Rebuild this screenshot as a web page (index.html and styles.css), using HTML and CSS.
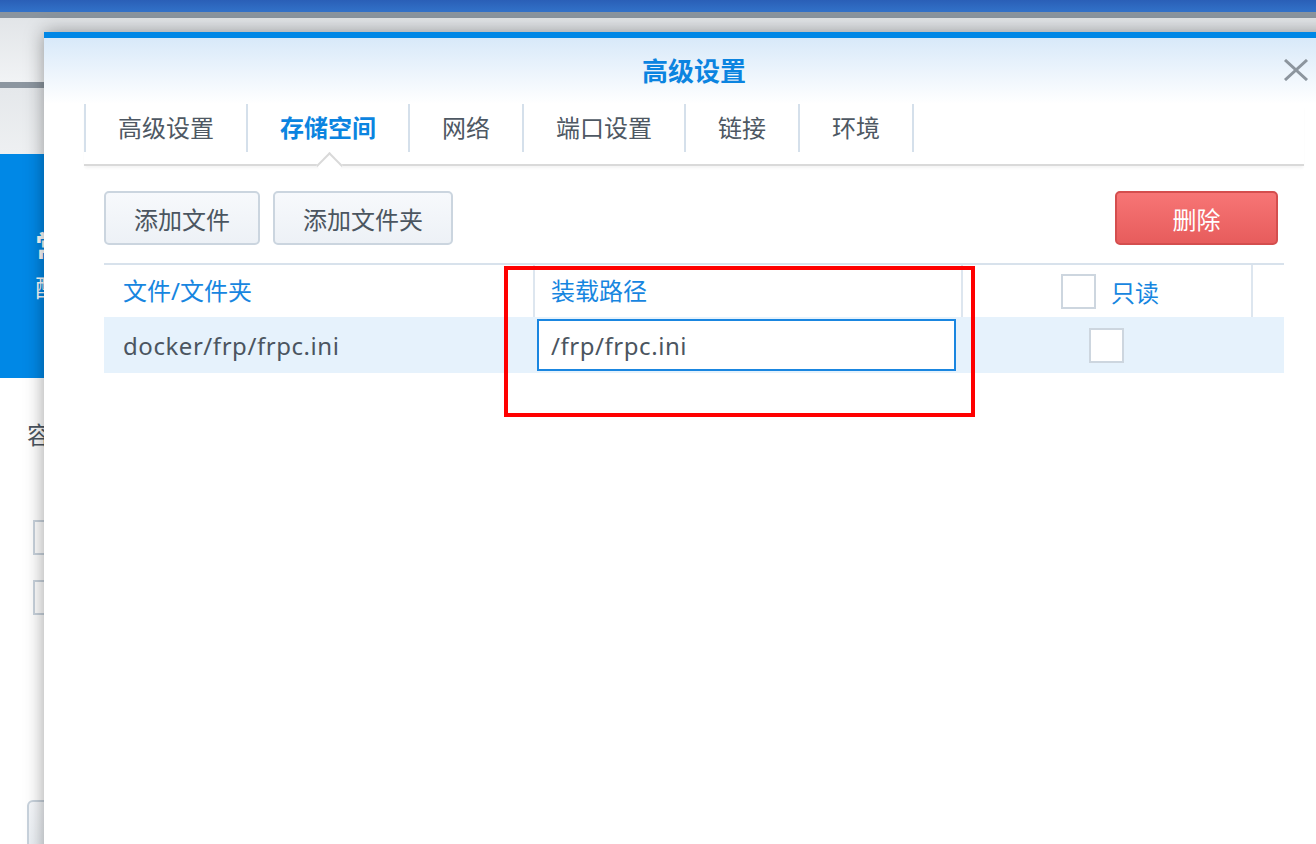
FILE: index.html
```html
<!DOCTYPE html>
<html lang="zh-CN">
<head>
<meta charset="utf-8">
<title>高级设置</title>
<link rel="stylesheet" href="styles.css">
</head>
<body>
  <div class="topbar"></div>
  <div class="subbar"></div>
  <div class="bg-app">
    <div class="bg-head"></div>
    <div class="bg-rule"></div>
    <div class="bg-light"></div>
    <div class="bg-blue">
      <div class="bg-title">常规设置</div>
      <div class="bg-sub">配置容器</div>
    </div>
    <div class="bg-body">
      <div class="bg-label">容器名称</div>
      <span class="bg-check"></span>
      <span class="bg-check second"></span>
      <div class="bg-btn"></div>
    </div>
  </div>

  <div class="window">
    <div class="win-head">
      <h1 class="win-title">高级设置</h1>
      <svg class="close" width="26" height="22" viewBox="0 0 26 22" aria-label="关闭">
        <path d="M2 1 L24 21 M24 1 L2 21" stroke="#8c959e" stroke-width="3" fill="none"/>
      </svg>
    </div>
    <div class="tabs-wrap">
      <div class="tabbar">
        <div class="tab">高级设置</div>
        <div class="tab active">存储空间</div>
        <div class="tab">网络</div>
        <div class="tab">端口设置</div>
        <div class="tab">链接</div>
        <div class="tab last">环境</div>
      </div>
    </div>
    <div class="pane">
      <div class="toolbar">
        <button class="btn">添加文件</button>
        <button class="btn">添加文件夹</button>
        <button class="btn btn-danger">删除</button>
      </div>
      <div class="grid">
        <div class="hcell c1">文件/文件夹</div>
        <div class="hcell c2">装载路径</div>
        <div class="hcell c3"><span class="check"></span><span class="ro">只读</span></div>
        <div class="hcell c4"></div>
        <div class="dcell c1 path">docker/frp/frpc.ini</div>
        <div class="dcell c2 edit"><input class="path-input path" type="text" value="/frp/frpc.ini"></div>
        <div class="dcell c3"><span class="check"></span></div>
        <div class="dcell c4"></div>
      </div>
    </div>
    <div class="mark"></div>
  </div>
</body>
</html>
```

FILE: styles.css
```css
* { box-sizing: border-box; }
html, body { margin: 0; padding: 0; }
body {
  width: 1316px;
  height: 844px;
  overflow: hidden;
  position: relative;
  background: #fff;
  font-family: "Noto Sans", "Noto Sans CJK SC", sans-serif;
  color: #4b5560;
}

/* background application */
.topbar { height: 12px; background: linear-gradient(#2a5fb7, #3272c9); }
.subbar { height: 6px; background: #8a949e; }
.bg-head { height: 64px; background: linear-gradient(#e2e5e8, #f1f3f5); }
.bg-rule { height: 6px; background: #8c96a0; }
.bg-light { height: 66px; background: linear-gradient(#e5e8eb, #eef0f2); }
.bg-blue {
  height: 224px;
  background: #0088e6;
  color: #fff;
  padding: 74px 0 0 35px;
  white-space: nowrap;
}
.bg-title { font-size: 30px; font-weight: 700; line-height: 36px; }
.bg-sub { font-size: 24px; line-height: 34px; margin-top: 7px; }
.bg-body { padding-left: 27px; white-space: nowrap; }
.bg-label { font-size: 24px; line-height: 32px; margin-top: 41px; }
.bg-check {
  display: block;
  width: 35px; height: 35px;
  margin: 69px 0 0 6px;
  border: 2px solid #c9d3dd;
  background: #fff;
}
.bg-check.second { margin-top: 25px; }
.bg-btn {
  margin-top: 185px;
  width: 200px; height: 60px;
  border: 2px solid #c9d3dd;
  border-radius: 6px;
  background: linear-gradient(#f6f8fb, #e9eef3);
}

/* dialog window */
.window {
  position: absolute;
  left: 44px;
  top: 32px;
  width: 1300px;
  height: 830px;
  background: #fff;
  border-top: 6px solid #0087e6;
  box-shadow: 0 0 18px rgba(0, 0, 0, 0.38);
}
.win-head {
  height: 66px;
  background: linear-gradient(#d8e9f9, #ffffff);
  display: flex;
  align-items: center;
  justify-content: center;
  position: relative;
}
.win-title {
  margin: 0;
  font-size: 26px;
  font-weight: 700;
  color: #0b84e0;
  line-height: 34px;
}
.close { position: absolute; right: 35px; top: 21px; }

.tabs-wrap { padding: 0 40px; }
.tabbar {
  height: 62px;
  display: flex;
  align-items: flex-start;
  border-bottom: 2px solid #d9d9d9;
  box-shadow: 0 3px 3px -1px rgba(0, 0, 0, 0.05);
}
.tab {
  position: relative;
  height: 48px;
  line-height: 48px;
  padding: 0 32px;
  border-left: 2px solid #d5e0eb;
  font-size: 24px;
  color: #4e5863;
  white-space: nowrap;
}
.tab.last { border-right: 2px solid #d5e0eb; }
.tab.active { color: #0b84e0; font-weight: 700; }
.tab.active::after {
  content: "";
  position: absolute;
  left: 50%;
  top: 52px;
  width: 17px;
  height: 17px;
  margin-left: -8.5px;
  background: #fff;
  border-top: 2px solid #d9d9d9;
  border-left: 2px solid #d9d9d9;
  transform: rotate(45deg);
}

.pane { padding: 25px 60px 0; }
.toolbar { display: flex; gap: 13px; }
.btn {
  height: 54px;
  padding: 0 28px;
  border: 2px solid #cbd5df;
  border-radius: 5px;
  background: linear-gradient(#f7f9fc, #edf1f6);
  font-family: inherit;
  font-size: 24px;
  color: #4b5560;
}
.btn-danger {
  margin-left: auto;
  margin-right: 6px;
  width: 163px;
  background: linear-gradient(#f77575, #e75c5c);
  border-color: #d44e4e;
  color: #fff;
}

.grid {
  margin-top: 18px;
  border-top: 2px solid #d8e2ec;
  display: grid;
  grid-template-columns: 431px 428px 290px 1fr;
}
.hcell {
  height: 52px;
  padding-bottom: 4px;
  display: flex;
  align-items: center;
  font-size: 24px;
  color: #1786e0;
  white-space: nowrap;
}
.hcell.c1, .hcell.c2, .hcell.c3 { border-right: 2px solid #dde6ef; }
.c1 { padding-left: 19px; }
.hcell.c2 { padding-left: 16px; }
.c3 { justify-content: center; }
.hcell.c3 { gap: 15px; padding-left: 6px; padding-bottom: 0; }
.dcell {
  height: 56px;
  display: flex;
  align-items: center;
  background: #e6f2fc;
  font-size: 24px;
  white-space: nowrap;
}
.dcell.c3 { padding-right: 4px; }
.dcell.edit { padding: 0 7px 0 2px; }
.path { letter-spacing: 0.55px; }
.path-input {
  width: 100%;
  height: 52px;
  border: 2px solid #1a86e0;
  background: #fff;
  padding: 0 12px;
  font-family: inherit;
  font-size: 24px;
  color: #4b5560;
  outline: none;
}
.check {
  display: inline-block;
  width: 35px;
  height: 35px;
  border: 2px solid #cdd6df;
  background: #fff;
}

/* annotation overlay */
.mark {
  position: absolute;
  left: 460px;
  top: 228px;
  width: 471px;
  height: 151px;
  border: 4px solid #ff0000;
}
```
